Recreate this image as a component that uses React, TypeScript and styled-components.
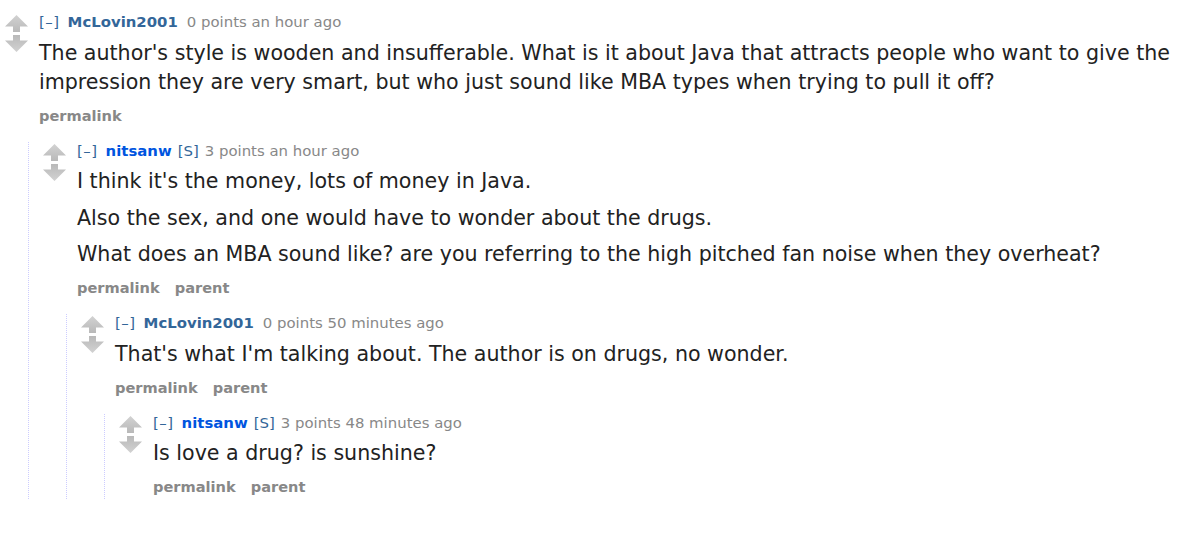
import styled, { createGlobalStyle } from "styled-components"

type CommentData = {
    author: string
    submitter?: boolean
    points: number
    age: string
    paragraphs: string[]
    parent?: boolean
    replies?: CommentData[]
}

const thread: CommentData = {
    author: "McLovin2001",
    points: 0,
    age: "an hour ago",
    paragraphs: [
        "The author's style is wooden and insufferable. What is it about Java that attracts people who want to give the impression they are very smart, but who just sound like MBA types when trying to pull it off?",
    ],
    replies: [
        {
            author: "nitsanw",
            submitter: true,
            points: 3,
            age: "an hour ago",
            parent: true,
            paragraphs: [
                "I think it's the money, lots of money in Java.",
                "Also the sex, and one would have to wonder about the drugs.",
                "What does an MBA sound like? are you referring to the high pitched fan noise when they overheat?",
            ],
            replies: [
                {
                    author: "McLovin2001",
                    points: 0,
                    age: "50 minutes ago",
                    parent: true,
                    paragraphs: ["That's what I'm talking about. The author is on drugs, no wonder."],
                    replies: [
                        {
                            author: "nitsanw",
                            submitter: true,
                            points: 3,
                            age: "48 minutes ago",
                            parent: true,
                            paragraphs: ["Is love a drug? is sunshine?"],
                        },
                    ],
                },
            ],
        },
    ],
}

const GlobalStyle = createGlobalStyle`
body {
    margin: 0;
    background: #ffffff;
}
`

const StyledPage = styled.div`
padding: 13px 10px 0 0;
`

const StyledComment = styled.div<{ $nested: boolean }>`
padding-left: ${(p) => (p.$nested ? "14px" : "5px")};
border-left: ${(p) => (p.$nested ? "1px dotted #ccf" : "none")};
`

const StyledRow = styled.div`
display: flex;
gap: 11px;
`

const StyledArrows = styled.div`
display: flex;
flex-direction: column;
gap: 3px;
padding-top: 2px;
width: 23px;
flex-shrink: 0;
`

const StyledEntry = styled.div`
flex: 1;
min-width: 0;
`

const StyledTagline = styled.div`
font-family: "DejaVu Sans", Verdana, sans-serif;
font-size: 14.9px;
line-height: 18px;
color: #888;
margin-bottom: 7.5px;
white-space: nowrap;
`

const StyledExpand = styled.span`
color: #369;
margin-right: 8px;
letter-spacing: 0.5px;
`

const StyledAuthor = styled.span<{ $submitter: boolean }>`
font-weight: 700;
color: ${(p) => (p.$submitter ? "#0055df" : "#369")};
margin-right: ${(p) => (p.$submitter ? "6px" : "9px")};
`

const StyledSubmitterTag = styled.span`
color: #369;
margin-right: 6px;
`

const StyledBody = styled.div`
font-family: "DejaVu Sans", Verdana, sans-serif;
font-size: 20.6px;
line-height: 29px;
color: #222;

p {
    margin: 0;
}

p + p {
    margin-top: 7.5px;
}
`

const StyledButtons = styled.ul`
display: flex;
gap: 15px;
list-style: none;
padding: 0;
margin: 10px 0 3px;
font-family: "DejaVu Sans", Verdana, sans-serif;
font-size: 14.6px;
font-weight: 700;
line-height: 18px;
color: #888;
`

const StyledReplies = styled.div`
margin: 14px 0 0 23px;
`

function Arrow({ down }: { down?: boolean }) {
    return (
        <svg width="23" height="17" viewBox="0 0 23 17" style={{ display: "block", transform: down ? "scaleY(-1)" : undefined }}>
            <defs>
                <linearGradient id="arrowFill" x1="0" y1="0" x2="0" y2="1">
                    <stop offset="0" stopColor="#d2d2d2" />
                    <stop offset="1" stopColor="#b9b9b9" />
                </linearGradient>
            </defs>
            <polygon points="11.5,0 23,11.5 15,11.5 15,17 8,17 8,11.5 0,11.5" fill="url(#arrowFill)" />
        </svg>
    )
}

function Comment({ comment, nested }: { comment: CommentData; nested: boolean }) {
    return (
        <StyledComment $nested={nested}>
            <StyledRow>
                <StyledArrows>
                    <Arrow />
                    <Arrow down />
                </StyledArrows>
                <StyledEntry>
                    <StyledTagline>
                        <StyledExpand>[–]</StyledExpand>
                        <StyledAuthor $submitter={!!comment.submitter}>{comment.author}</StyledAuthor>
                        {comment.submitter && <StyledSubmitterTag>[S]</StyledSubmitterTag>}
                        {comment.points} points {comment.age}
                    </StyledTagline>
                    <StyledBody>
                        {comment.paragraphs.map((text) => (
                            <p key={text}>{text}</p>
                        ))}
                    </StyledBody>
                    <StyledButtons>
                        <li>permalink</li>
                        {comment.parent && <li>parent</li>}
                    </StyledButtons>
                </StyledEntry>
            </StyledRow>
            {comment.replies && (
                <StyledReplies>
                    {comment.replies.map((reply, i) => (
                        <Comment key={i} comment={reply} nested={true} />
                    ))}
                </StyledReplies>
            )}
        </StyledComment>
    )
}

export default function App() {
    return (
        <>
            <GlobalStyle />
            <StyledPage>
                <Comment comment={thread} nested={false} />
            </StyledPage>
        </>
    )
}
